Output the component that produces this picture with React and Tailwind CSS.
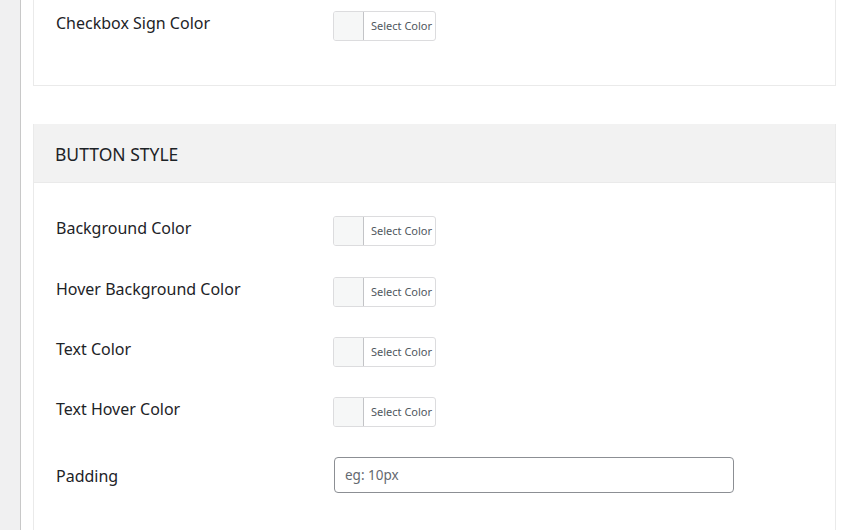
import React from "react";

function ColorPicker() {
  return (
    <div className="flex h-[30px] w-[103px] rounded-[3px] border border-[#dcdcde] bg-white overflow-hidden">
      <div className="w-[30px] h-full bg-[#f6f7f7] border-r border-[#c3c4c7]"></div>
      <div className="flex-1 flex items-center pl-[7px] text-[11px] text-[#50575e]">Select Color</div>
    </div>
  );
}

function Row({ label, children, mt = "mt-0", className = "" }) {
  return (
    <div className={`flex items-start ${className}`}>
      <div className={`w-[277px] shrink-0 text-[16px] leading-[24px] text-[#1d2327] ${mt}`}>{label}</div>
      {children}
    </div>
  );
}

export default function App() {
  return (
    <div
      className="flex h-[530px] w-[859px] overflow-hidden bg-white"
      style={{ fontFamily: '"Noto Sans", "Open Sans", sans-serif' }}
    >
      <div className="w-[21px] shrink-0 bg-[#f0f0f1] border-r border-[#c8c8c8]"></div>
      <div className="flex flex-col pl-[12px] w-[815px]">
        {/* Card 1 (tail) */}
        <div className="border-x border-b border-[#eaeaea] h-[86px] pt-[11px] pl-[22px]">
          <Row label="Checkbox Sign Color">
            <ColorPicker />
          </Row>
        </div>

        {/* Card 2 */}
        <div className="mt-[38px] border-x border-[#eaeaea] flex-1">
          <div className="h-[59px] bg-[#f2f2f2] border-b border-[#eaeaea] flex items-center pl-[21px] pt-[3px]">
            <span className="text-[17.5px] font-normal text-[#1d2327]">BUTTON STYLE</span>
          </div>
          <div className="pl-[22px] pt-[33px] flex flex-col gap-[30px]">
            <Row label="Background Color">
              <ColorPicker />
            </Row>
            <Row label="Hover Background Color" className="mt-[1px]">
              <ColorPicker />
            </Row>
            <Row label="Text Color">
              <ColorPicker />
            </Row>
            <Row label="Text Hover Color">
              <ColorPicker />
            </Row>
            <Row label="Padding" mt="mt-[7px]">
              <input
                type="text"
                placeholder="eg: 10px"
                className="ml-[1px] w-[400px] h-[36px] rounded-[4px] border border-[#8c8f94] px-[10px] text-[13.5px] text-[#2c3338] placeholder:text-[#646970] outline-none"
              />
            </Row>
          </div>
        </div>
      </div>
      <div className="flex-1 bg-white"></div>
    </div>
  );
}
